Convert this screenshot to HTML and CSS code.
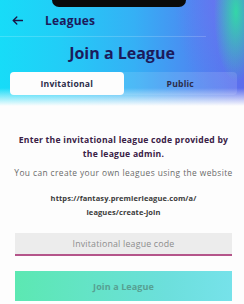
FILE: index.html
```html
<!DOCTYPE html>
<html>
<head>
<meta charset="utf-8">
<link rel="stylesheet" href="styles.css">
</head>
<body>
<div class="screen">
  <div class="hero">
    <div class="notch"></div>
    <div class="topbar">
      <svg class="back" width="11" height="9" viewBox="0 0 11 9"><path d="M10.5 4.5H1.2M4.8 1L1.2 4.5L4.8 8" fill="none" stroke="#1a1446" stroke-width="1.3" stroke-linecap="round" stroke-linejoin="round"/></svg>
      <span class="crumb">Leagues</span>
    </div>
    <div class="divider"></div>
    <h1 class="title">Join a League</h1>
    <div class="tabs">
      <div class="tab active">Invitational</div>
      <div class="tab">Public</div>
    </div>
  </div>
  <div class="content">
    <p class="lead">Enter the invitational league code provided by the league admin.</p>
    <p class="note">You can create your own leagues using the website</p>
    <p class="link">https://fantasy.premierleague.com/a/<br>leagues/create-join</p>
    <div class="field"><span class="placeholder">Invitational league code</span></div>
    <div class="btn">Join a League</div>
  </div>
</div>
</body>
</html>
```
FILE: styles.css
```css
* { box-sizing: border-box; }
html, body { margin: 0; padding: 0; }
body { width: 244px; height: 304px; overflow: hidden; background: #fdfdfd; font-family: "Open Sans", "Noto Sans", sans-serif; }
.screen { position: relative; width: 244px; height: 304px; }
.hero {
  position: relative;
  height: 108px;
  padding-top: 10px;
  background:
    linear-gradient(to bottom, rgba(253,253,253,0) 0px, rgba(253,253,253,0) 88px, #fdfdfd 106px),
    radial-gradient(ellipse 22px 70px at 236px 12px, rgba(40,240,150,0.8), rgba(40,240,150,0) 100%),
    radial-gradient(ellipse 40px 90px at 215px 0px, rgba(120,110,240,0.45), rgba(120,110,240,0) 100%),
    linear-gradient(to right, #17dcf8 0%, #22cdf7 25%, #35b0f5 55%, #4d88f1 80%, #5d6ced 100%);
}
.notch { position: absolute; left: 52px; top: 0; width: 134px; height: 7px; background: #0a0a0a; border-radius: 0 0 8px 8px; }
.topbar { display: flex; align-items: center; height: 20px; padding-left: 12px; }
.back { display: block; }
.crumb { margin-left: 22px; font-size: 12px; font-weight: 700; color: #1c1b5c; letter-spacing: 0.2px; }
.divider { height: 1px; margin: 6px 38px 0 0; background: rgba(255,255,255,0.18); }
.title { margin: 6px 0 0; text-align: center; font-size: 16px; font-weight: 700; color: #1c1b5c; line-height: 20px; }
.tabs { display: flex; margin: 9px 7px 0 10px; height: 23px; border-radius: 4px; background: rgba(255,255,255,0.12); }
.tab { flex: 1; display: flex; align-items: center; justify-content: center; font-size: 8.6px; font-weight: 700; color: #2c2c4a; border-radius: 4px; letter-spacing: 0.2px; }
.tab.active { background: #fdfdfd; }
.content { padding: 25px 12px 0 15px; text-align: center; }
.lead { margin: 0 auto; max-width: 216px; font-size: 8.6px; font-weight: 700; line-height: 14px; color: #3a2146; letter-spacing: 0.25px; }
.note { margin: 6px -4px 0 -4px; font-size: 8.4px; line-height: 12px; color: #6a6a6a; letter-spacing: 0.4px; white-space: nowrap; }
.link { margin: 12px 0 0; font-size: 7.5px; font-weight: 700; line-height: 14px; color: #3a3a3a; letter-spacing: 0.1px; }
.field { margin-top: 14px; height: 23px; background: #ececec; border-bottom: 2px solid #b4558a; display: flex; align-items: center; justify-content: center; }
.placeholder { font-size: 8.8px; color: #8d8d8d; letter-spacing: 0.2px; }
.btn { margin-top: 15px; height: 30px; display: flex; align-items: center; justify-content: center; font-size: 9px; font-weight: 700; color: #57a092; background: linear-gradient(to right, #5ce8b2, #6cdfdc 70%, #76e2ea); letter-spacing: 0.1px; }
```
